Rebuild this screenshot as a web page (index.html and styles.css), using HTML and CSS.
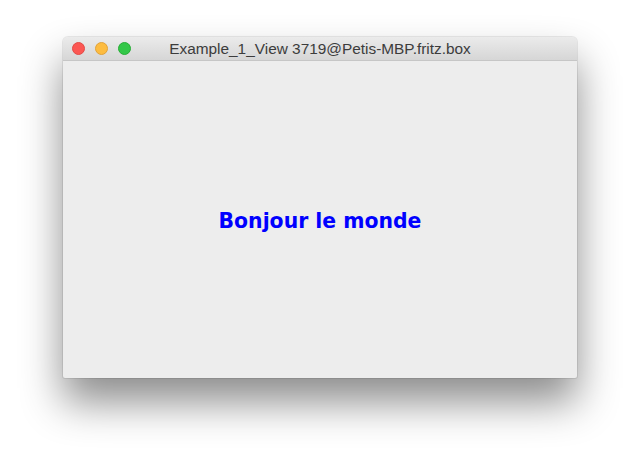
FILE: index.html
```html
<!DOCTYPE html>
<html>
<head>
<meta charset="utf-8">
<link rel="stylesheet" href="styles.css">
</head>
<body>
<div class="window">
  <div class="titlebar">
    <div class="lights">
      <span class="light red"></span>
      <span class="light yellow"></span>
      <span class="light green"></span>
    </div>
    <div class="title">Example_1_View 3719@Petis-MBP.fritz.box</div>
  </div>
  <div class="content">
    <div class="hello">Bonjour le monde</div>
  </div>
</div>
</body>
</html>
```
FILE: styles.css
```css
html, body {
  margin: 0;
  padding: 0;
  background: #ffffff;
}
body {
  width: 640px;
  height: 469px;
  overflow: hidden;
  padding: 37px 0 0 63px;
  box-sizing: border-box;
}
.window {
  width: 514px;
  height: 341px;
  border-radius: 5px 5px 2px 2px;
  background: #ededed;
  box-shadow: 0 0 0 1px rgba(0,0,0,0.08), 0 24px 42px rgba(0,0,0,0.45);
  display: flex;
  flex-direction: column;
  overflow: hidden;
}
.titlebar {
  height: 23px;
  flex: none;
  border-bottom: 1px solid #c6c6c6;
  background: linear-gradient(#ebebeb, #d6d6d6);
  position: relative;
  display: flex;
  align-items: center;
  justify-content: center;
}
.lights {
  position: absolute;
  left: 9px;
  top: 5px;
  display: flex;
  gap: 10px;
}
.light {
  width: 13px;
  height: 13px;
  border-radius: 50%;
  box-sizing: border-box;
}
.red { background: #fc5753; border: 1px solid #e24b46; }
.yellow { background: #fdbc40; border: 1px solid #e0a23a; }
.green { background: #33c748; border: 1px solid #28ad36; }
.title {
  font-family: "Liberation Sans", Arial, sans-serif;
  font-size: 15.4px;
  color: #3c3c3c;
  margin-top: 1px;
}
.content {
  flex: 1;
  display: flex;
  align-items: center;
  justify-content: center;
}
.hello {
  font-family: "DejaVu Sans", Verdana, sans-serif;
  font-weight: bold;
  font-size: 20.4px;
  color: #0000ff;
  margin-top: 3px;
}
```
